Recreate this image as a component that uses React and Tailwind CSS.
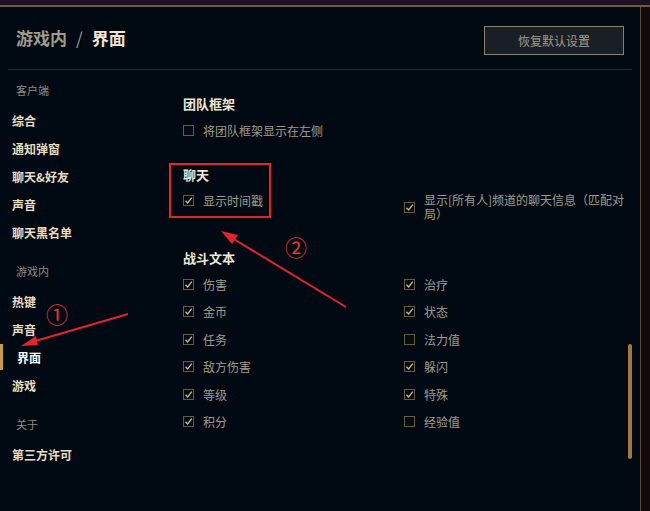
import React from "react";

const font = { fontFamily: '"Noto Sans CJK SC", "Noto Sans", sans-serif' };

const clientItems = ["综合", "通知弹窗", "聊天&好友", "声音", "聊天黑名单"];
const gameItems = ["热键", "声音", "界面", "游戏"];

const combatLeft = [
  ["伤害", true],
  ["金币", true],
  ["任务", true],
  ["敌方伤害", true],
  ["等级", true],
  ["积分", true],
];
const combatRight = [
  ["治疗", true],
  ["状态", true],
  ["法力值", false],
  ["躲闪", true],
  ["特殊", true],
  ["经验值", false],
];

const Box = ({ checked }) => (
  <span className="w-[11px] h-[11px] shrink-0 border border-[#6b5a3a] bg-[#050b12] flex items-center justify-center">
    {checked && (
      <svg width="9" height="9" viewBox="0 0 9 9">
        <polyline
          points="1.5,4.8 3.6,7 7.8,1.6"
          fill="none"
          stroke="#cdbb90"
          strokeWidth="1.3"
        />
      </svg>
    )}
  </span>
);

const Check = ({ label, checked, className = "" }) => (
  <div className={`flex items-center gap-[9px] h-[20px] ${className}`}>
    <Box checked={checked} />
    <span className="text-[12px] text-[#a09b8c] leading-[15px]">{label}</span>
  </div>
);

const Label = ({ children, first }) => (
  <div
    className={`h-[28px] mb-[3px] pl-[16px] flex items-center text-[11px] text-[#8f8a7e] ${
      first ? "" : "mt-[10px]"
    }`}
  >
    {children}
  </div>
);

const NavItem = ({ children, active }) => (
  <div className="h-[28px] flex items-center relative">
    {active && <span className="absolute left-0 top-0 w-[3px] h-[26px] bg-[#c89b3c]" />}
    <span
      className={`text-[12px] font-bold ${
        active ? "pl-[17px] text-[#ffffff]" : "pl-[12px] text-[#e8dcc0]"
      }`}
    >
      {children}
    </span>
  </div>
);

const Heading = ({ children, className = "" }) => (
  <div className={`h-[20px] flex items-center text-[13px] font-bold text-[#f0e6d2] ${className}`}>
    {children}
  </div>
);

export default function App() {
  return (
    <div
      className="w-[650px] h-[511px] bg-[#140c10] relative overflow-hidden flex flex-col"
      style={font}
    >
      <div className="h-[5px] bg-[#1d1022]" />
      <div className="h-[2px] bg-[#6f5a34]" />
      <div className="flex-1 flex">
        <div className="w-[641px] bg-[#010a13] border-r border-[#5c4b2e] flex flex-col">
          {/* header */}
          <div className="h-[62px] flex items-start justify-between pt-[19px] pl-[16px] pr-[16px]">
            <div className="flex items-center text-[17px] font-bold leading-[24px]">
              <span className="text-[#a09b8c]">游戏内</span>
              <span className="text-[#a09b8c] mx-[9px] font-normal">/</span>
              <span className="text-[#f0e6d2]">界面</span>
            </div>
            <button className="w-[140px] h-[29px] border border-[#8c8168] bg-[#1a1f26] text-[12px] text-[#a09b8c]">
              恢复默认设置
            </button>
          </div>
          <div className="mx-[8px] h-px bg-[#232a31]" />

          <div className="flex-1 flex">
            {/* sidebar */}
            <div className="w-[183px] pt-[6px]">
              <Label first>客户端</Label>
              {clientItems.map((t) => (
                <NavItem key={t}>{t}</NavItem>
              ))}
              <Label>游戏内</Label>
              {gameItems.map((t) => (
                <NavItem key={t} active={t === "界面"}>
                  {t}
                </NavItem>
              ))}
              <Label>关于</Label>
              <NavItem>第三方许可</NavItem>
            </div>

            {/* content */}
            <div className="flex-1 pt-[24px]">
              <Heading>团队框架</Heading>
              <Check className="mt-[6px]" label="将团队框架显示在左侧" />

              <Heading className="mt-[25px]">聊天</Heading>
              <div className="mt-[5px] grid grid-cols-[221px_1fr] items-start">
                <Check label="显示时间戳" checked />
                <div className="mt-[3px] flex items-center gap-[9px] pr-[2px]">
                  <Box checked />
                  <span className="text-[12px] text-[#a09b8c] leading-[14px]">
                    显示[所有人]频道的聊天信息（匹配对局）
                  </span>
                </div>
              </div>

              <Heading className="mt-[27px]">战斗文本</Heading>
              <div className="mt-[6px] grid grid-cols-[221px_1fr] gap-y-[7.5px]">
                {combatLeft.map(([l, c], i) => (
                  <React.Fragment key={l}>
                    <Check label={l} checked={c} />
                    <Check label={combatRight[i][0]} checked={combatRight[i][1]} />
                  </React.Fragment>
                ))}
              </div>
            </div>

            {/* scroll track */}
            <div className="w-[4px] mr-[8px] pt-[274px]">
              <div className="h-[115px] rounded-full bg-[#a07a3c]" />
            </div>
          </div>
        </div>
        <div className="flex-1 bg-[#120a0c]" />
      </div>

      {/* annotations */}
      <div className="absolute left-[169px] top-[163px] w-[102px] h-[55px] border-2 border-[#e3242b]" />
      <span className="absolute left-[46px] top-[301px] text-[22px] leading-[24px] text-[#e3343a]">①</span>
      <span className="absolute left-[285px] top-[234px] text-[22px] leading-[24px] text-[#e3343a]">②</span>
      <svg className="absolute inset-0 pointer-events-none" width="650" height="511">
        <line x1="128" y1="314" x2="32" y2="342" stroke="#e3242b" strokeWidth="2" />
        <polygon points="21,346 36,336 38,345" fill="#e3242b" />
        <line x1="346" y1="307" x2="232" y2="238" stroke="#e3242b" strokeWidth="2" />
        <polygon points="221,231 238,235 232,244" fill="#e3242b" />
      </svg>
    </div>
  );
}
